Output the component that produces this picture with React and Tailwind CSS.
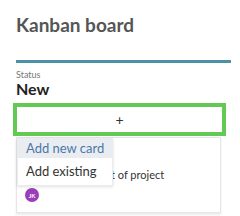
export default function App() {
  return (
    <div className="w-[240px] h-[216px] bg-white overflow-hidden px-4 font-['Lato',_sans-serif]">
      <h1 className="pt-[13px] text-[19px] leading-[24px] font-bold text-[#555]">Kanban board</h1>
      <div className="mt-[23px] h-[3px] w-[215px] bg-[#4b93a4]" />

      <div className="w-[205px]">
        <div className="mt-[7px] text-[9px] leading-[10px] text-[#777]">Status</div>
        <div className="text-[16px] leading-[18px] font-bold text-[#222]">New</div>

        <button className="mt-[5px] -ml-[3px] w-[213px] h-[33px] border-4 border-[#62ca54] bg-white flex items-center justify-center text-[14px] text-[#333]">
          +
        </button>

        <div className="relative mt-px h-[76px] border border-[#e6e6e6] shadow-[0_2px_2px_rgba(0,0,0,0.08)] bg-white">
          <div className="pl-[10px] pt-[30px] text-[11px] leading-[14px] text-[#333]">Draft the first part of project</div>
          <div className="ml-[8px] mt-[6px] w-[14px] h-[14px] rounded-full bg-[#9a3db8] flex items-center justify-center text-[6px] font-bold text-white">
            JK
          </div>

          <div className="absolute left-0 top-0 w-[96px] bg-white border border-[#ececec] shadow-[0_1px_3px_rgba(0,0,0,0.12)] text-[13px]">
            <div className="h-[19px] pl-[8px] leading-[19px] bg-[#e9edf2] text-[#4c77a8]">Add new card</div>
            <div className="h-[27px] pl-[8px] pt-[4px] leading-[18px] text-[#333]">Add existing</div>
          </div>
        </div>
      </div>
    </div>
  );
}
